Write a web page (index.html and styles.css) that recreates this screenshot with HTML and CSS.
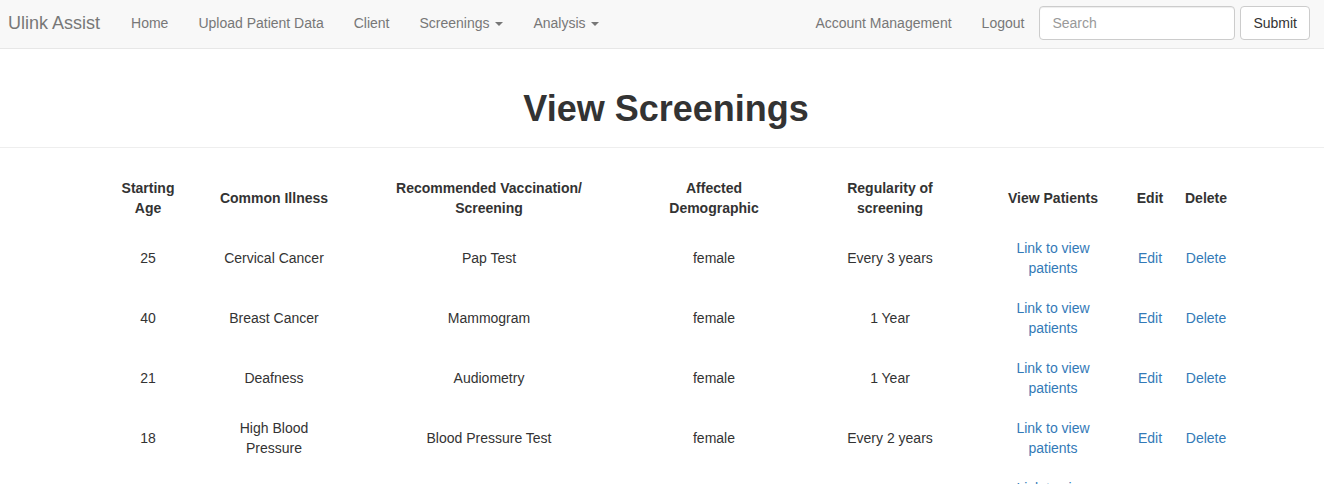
FILE: index.html
```html
<!DOCTYPE html>
<html lang="en">
<head>
<meta charset="utf-8">
<title>View Screenings</title>
<link rel="stylesheet" href="styles.css">
</head>
<body>
<nav class="navbar">
  <a class="brand" href="#">Ulink Assist</a>
  <ul class="nav">
    <li><a href="#">Home</a></li>
    <li><a href="#">Upload Patient Data</a></li>
    <li><a href="#">Client</a></li>
    <li><a href="#">Screenings <span class="caret"></span></a></li>
    <li><a href="#">Analysis <span class="caret"></span></a></li>
  </ul>
  <ul class="nav nav-right">
    <li><a href="#">Account Management</a></li>
    <li><a href="#">Logout</a></li>
  </ul>
  <form class="search-form">
    <input class="search-input" type="text" placeholder="Search">
    <button class="btn" type="button">Submit</button>
  </form>
</nav>

<h1 class="title">View Screenings</h1>
<hr class="rule">

<div class="container">
  <table class="screenings">
    <colgroup>
      <col class="c1"><col class="c2"><col class="c3"><col class="c4">
      <col class="c5"><col class="c6"><col class="c7"><col class="c8">
    </colgroup>
    <thead>
      <tr>
        <th>Starting<br>Age</th>
        <th>Common Illness</th>
        <th>Recommended Vaccination/<br>Screening</th>
        <th>Affected<br>Demographic</th>
        <th>Regularity of<br>screening</th>
        <th>View Patients</th>
        <th>Edit</th>
        <th>Delete</th>
      </tr>
    </thead>
    <tbody>
      <tr>
        <td>25</td><td>Cervical Cancer</td><td>Pap Test</td><td>female</td><td>Every 3 years</td>
        <td><a href="#">Link to view<br>patients</a></td><td><a href="#">Edit</a></td><td><a href="#">Delete</a></td>
      </tr>
      <tr>
        <td>40</td><td>Breast Cancer</td><td>Mammogram</td><td>female</td><td>1 Year</td>
        <td><a href="#">Link to view<br>patients</a></td><td><a href="#">Edit</a></td><td><a href="#">Delete</a></td>
      </tr>
      <tr>
        <td>21</td><td>Deafness</td><td>Audiometry</td><td>female</td><td>1 Year</td>
        <td><a href="#">Link to view<br>patients</a></td><td><a href="#">Edit</a></td><td><a href="#">Delete</a></td>
      </tr>
      <tr>
        <td>18</td><td>High Blood<br>Pressure</td><td>Blood Pressure Test</td><td>female</td><td>Every 2 years</td>
        <td><a href="#">Link to view<br>patients</a></td><td><a href="#">Edit</a></td><td><a href="#">Delete</a></td>
      </tr>
      <tr>
        <td>50</td><td>Colon Cancer</td><td>Colonoscopy</td><td>male</td><td>Every 10 years</td>
        <td><a href="#">Link to view<br>patients</a></td><td><a href="#">Edit</a></td><td><a href="#">Delete</a></td>
      </tr>
    </tbody>
  </table>
</div>
</body>
</html>
```

FILE: styles.css
```css
* { box-sizing: border-box; }

html, body {
  margin: 0;
  padding: 0;
}

body {
  font-family: "Liberation Sans", Arial, Helvetica, sans-serif;
  font-size: 14px;
  line-height: 20px;
  color: #333;
  background: #fff;
}

a { text-decoration: none; color: #337ab7; }

.navbar {
  display: flex;
  align-items: center;
  height: 49px;
  background: #f8f8f8;
  border-bottom: 1px solid #e7e7e7;
  padding-right: 14px;
}

.brand {
  font-size: 18px;
  line-height: 20px;
  color: #777;
  padding: 13px 16px 15px 8px;
}

.nav {
  display: flex;
  list-style: none;
  margin: 0;
  padding: 0;
}

.nav a {
  display: block;
  color: #777;
  padding: 13px 15px 15px;
  line-height: 20px;
}

.nav-right { margin-left: auto; }

.caret {
  display: inline-block;
  width: 0;
  height: 0;
  margin-left: 2px;
  vertical-align: middle;
  border-top: 4px solid #777;
  border-left: 4px solid transparent;
  border-right: 4px solid transparent;
}

.search-form {
  display: flex;
  align-items: center;
  gap: 5px;
  margin-top: -2px;
}

.search-input {
  width: 196px;
  height: 34px;
  padding: 6px 12px;
  font: inherit;
  color: #555;
  background: #fff;
  border: 1px solid #ccc;
  border-radius: 4px;
  box-shadow: inset 0 1px 1px rgba(0,0,0,.075);
}

.search-input::placeholder { color: #999; }

.btn {
  height: 34px;
  padding: 6px 12px;
  font: inherit;
  color: #333;
  background: #fff;
  border: 1px solid #ccc;
  border-radius: 4px;
}

.title {
  text-align: center;
  font-size: 36px;
  line-height: 40px;
  font-weight: bold;
  margin: 40px 0 0;
  padding-left: 8px;
}

.rule {
  border: 0;
  border-top: 1px solid #eee;
  margin: 18px 0 20px;
}

.container {
  width: 1140px;
  margin: 0 auto 0 92px;
}

.screenings {
  width: 1140px;
  border-collapse: collapse;
  table-layout: fixed;
}

.c1 { width: 112px; }
.c2 { width: 140px; }
.c3 { width: 290px; }
.c4 { width: 160px; }
.c5 { width: 192px; }
.c6 { width: 134px; }
.c7 { width: 60px; }
.c8 { width: 52px; }

.screenings th,
.screenings td {
  text-align: center;
  vertical-align: middle;
  padding: 10px 0;
  height: 60px;
  white-space: nowrap;
}

.screenings th { font-weight: bold; }
```
